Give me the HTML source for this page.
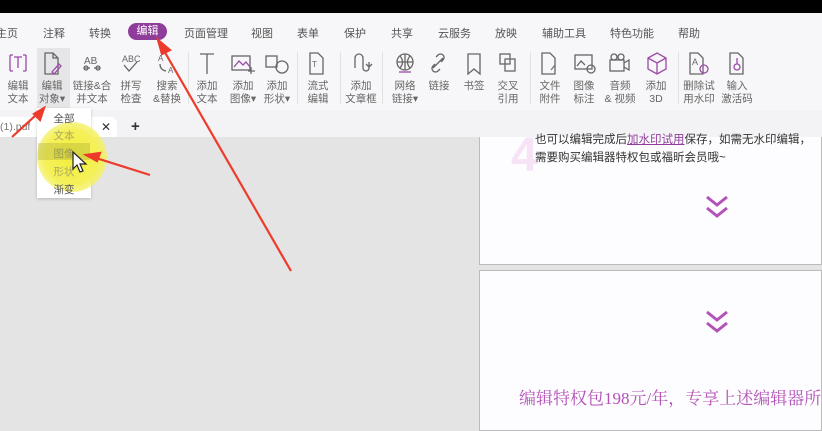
<!DOCTYPE html>
<html><head><meta charset="utf-8"><style>
*{margin:0;padding:0;box-sizing:border-box}
body{width:822px;height:431px;overflow:hidden;position:relative;background:#e4e4e4;font-family:"Liberation Sans","Noto Sans CJK SC",sans-serif;color:#555}
.abs{position:absolute}
.m{position:absolute;top:25px;font-size:11px;color:#555}
.t{position:absolute;top:80px;font-size:10.5px;line-height:13px;color:#666;text-align:center;width:44px;margin-left:-22px}
.ic{position:absolute;top:52px;width:24px;height:24px;margin-left:-12px}
.sep{position:absolute;top:52px;width:1px;height:52px;background:#e2e2e2}
.dd{position:absolute;left:38px;width:52px;text-align:center;font-size:10.5px;color:#555}
</style></head><body>
<div class="abs" style="left:0;top:0;width:822px;height:13px;background:#000"></div>
<div class="abs" style="left:0;top:13px;width:822px;height:97px;background:#f7f7f9"></div>
<div class="m" style="left:-4px">主页</div>
<div class="m" style="left:43px">注释</div>
<div class="m" style="left:89px">转换</div>
<div class="abs" style="left:128px;top:23px;width:39px;height:17px;border-radius:9px;background:#8e3d9a;color:#fff;font-size:11px;text-align:center;line-height:17px">编辑</div>
<div class="m" style="left:184px">页面管理</div>
<div class="m" style="left:251px">视图</div>
<div class="m" style="left:297px">表单</div>
<div class="m" style="left:344px">保护</div>
<div class="m" style="left:391px">共享</div>
<div class="m" style="left:438px">云服务</div>
<div class="m" style="left:495px">放映</div>
<div class="m" style="left:542px">辅助工具</div>
<div class="m" style="left:610px">特色功能</div>
<div class="m" style="left:678px">帮助</div>

<div class="abs" style="left:37px;top:48px;width:33px;height:61px;background:#e6e6e8"></div>
<svg class="abs" style="left:0;top:48px" width="822" height="32" fill="none" stroke="#666" stroke-width="1.3">
<g stroke="#9b4aa8"><path d="M10 7v16M10 7h3M10 23h3M26 7v16M23 7h3M23 23h3M14 9h8M18 9v11"/></g>
<path d="M45 5h8l5 5v16h-13z M53 5v5h5"/><path d="M52 24l7-8 2 2-7 8z" stroke="#9b4aa8"/>
<text x="84" y="16" font-size="10" fill="#666" stroke="none">AB</text><path d="M84 20h6M94 20h6"/><circle cx="86" cy="20" r="2"/><circle cx="98" cy="20" r="2"/>
<text x="122" y="14" font-size="9" fill="#666" stroke="none">ABC</text><path d="M124 17l5 6 8-9"/>
<text x="158" y="13" font-size="8" fill="#666" stroke="none">A</text><text x="168" y="25" font-size="8" fill="#666" stroke="none">A</text><path d="M160 16q0 6 6 7"/>
<path d="M200 6h14M207 6v20"/>
<rect x="232" y="8" width="18" height="14"/><path d="M234 19l5-6 4 4 3-3 4 5" stroke="#9b4aa8"/><path d="M251 19v7M248 23h7"/>
<rect x="266" y="8" width="11" height="11"/><circle cx="282" cy="19" r="6"/>
<path d="M310 5h8l5 5v16h-13z"/><text x="312" y="19" font-size="8" fill="#666" stroke="none">T</text>
<path d="M355 20v-10a4 4 0 0 1 8 0v10a3 3 0 0 0 6 0v-6"/><path d="M366 16l3 3 3-3"/>
<circle cx="405" cy="14" r="8"/><path d="M397 14h16M405 6v16M400 8q5 6 0 12M410 8q-5 6 0 12"/><path d="M399 24h12" stroke="#9b4aa8"/>
<path d="M433 20l10-10M435 16l-2 2a3 3 0 0 0 5 5l2-2M441 14l2-2a3 3 0 0 0-5-5l-2 2"/>
<path d="M468 6h12v20l-6-5-6 5z"/>
<rect x="500" y="6" width="10" height="10"/><rect x="505" y="11" width="10" height="12"/>
<path d="M542 5h8l5 5v16h-13z"/><path d="M551 22l4-5" stroke="#777"/>
<rect x="575" y="7" width="17" height="14"/><path d="M577 18l4-5 4 4"/><circle cx="591" cy="21" r="4"/>
<rect x="610" y="12" width="14" height="11"/><circle cx="614" cy="9" r="3"/><circle cx="621" cy="9" r="3"/><path d="M624 15l5-3v10l-5-3"/>
<g stroke="#9b4aa8"><path d="M648 10l9-5 9 5v11l-9 5-9-5z M648 10l9 5 9-5M657 15v11"/></g>
<path d="M690 5h8l5 5v16h-13z"/><text x="692" y="17" font-size="9" fill="#666" stroke="none">A</text><circle cx="704" cy="21" r="4" stroke="#9b4aa8"/>
<path d="M730 5h8l5 5v16h-13z"/><circle cx="737" cy="19" r="3" stroke="#9b4aa8"/><path d="M737 10v6" stroke="#9b4aa8"/>
</svg>
<div class="sep" style="left:188px"></div><div class="sep" style="left:297px"></div><div class="sep" style="left:340px"></div><div class="sep" style="left:382px"></div><div class="sep" style="left:530px"></div><div class="sep" style="left:678px"></div>
<div class="t" style="left:18px">编辑<br>文本</div>
<div class="t" style="left:52px">编辑<br>对象▾</div>
<div class="t" style="left:92px">链接&amp;合<br>并文本</div>
<div class="t" style="left:131px">拼写<br>检查</div>
<div class="t" style="left:167px">搜索<br>&amp;替换</div>
<div class="t" style="left:207px">添加<br>文本</div>
<div class="t" style="left:243px">添加<br>图像▾</div>
<div class="t" style="left:277px">添加<br>形状▾</div>
<div class="t" style="left:318px">流式<br>编辑</div>
<div class="t" style="left:361px">添加<br>文章框</div>
<div class="t" style="left:405px">网络<br>链接▾</div>
<div class="t" style="left:439px">链接</div>
<div class="t" style="left:474px">书签</div>
<div class="t" style="left:508px">交叉<br>引用</div>
<div class="t" style="left:550px">文件<br>附件</div>
<div class="t" style="left:584px">图像<br>标注</div>
<div class="t" style="left:620px">音频<br>&amp; 视频</div>
<div class="t" style="left:656px">添加<br>3D</div>
<div class="t" style="left:699px">删除试<br>用水印</div>
<div class="t" style="left:737px">输入<br>激活码</div>

<div class="abs" style="left:0;top:110px;width:822px;height:27px;background:#f3f3f5"></div>
<div class="abs" style="left:0;top:117px;width:117px;height:20px;background:#fff;border-radius:0 6px 0 0"></div>
<div class="abs" style="left:0;top:121px;font-size:10.5px;color:#777">(1).pdf</div>
<div class="abs" style="left:101px;top:120px;font-size:12px;color:#333">✕</div>
<div class="abs" style="left:131px;top:118px;font-size:15px;color:#333;font-weight:bold">+</div>

<div class="abs" style="left:479px;top:137px;width:343px;height:128px;background:#fdfcfe;border:1px solid #bbb;border-top:none"></div>
<div class="abs" style="left:479px;top:270px;width:343px;height:161px;background:#fdfcfe;border:1px solid #bbb"></div>
<div class="abs" style="left:511px;top:128px;font-size:48px;color:#f7e3f6;font-weight:bold">4</div>
<div class="abs" style="left:535px;top:131px;font-size:11.5px;color:#333;white-space:nowrap">也可以编辑完成后<span style="color:#8e3d9a;text-decoration:underline">加水印试用</span>保存，如需无水印编辑，</div>
<div class="abs" style="left:535px;top:149px;font-size:11.5px;color:#333">需要购买编辑器特权包或福昕会员哦~</div>
<svg class="abs" style="left:704px;top:194px" width="26" height="28" fill="none" stroke="#b352b8" stroke-width="3"><path d="M3 3l10 8 10-8M3 14l10 8 10-8"/></svg>
<svg class="abs" style="left:704px;top:309px" width="26" height="28" fill="none" stroke="#b352b8" stroke-width="3"><path d="M3 3l10 8 10-8M3 14l10 8 10-8"/></svg>
<div class="abs" style="left:519px;top:384px;font-size:17px;color:#b352b8;font-family:'Liberation Serif','Noto Serif CJK SC',serif;white-space:nowrap">编辑特权包198元/年，专享上述编辑器所</div>

<div class="abs" style="left:37px;top:108px;width:54px;height:90px;background:#fff;box-shadow:0 1px 3px rgba(0,0,0,.2)"></div>
<div class="abs" style="left:37px;top:122px;width:70px;height:70px;border-radius:50%;background:radial-gradient(circle,#f2ef3a 0,#f4f05a 55%,rgba(245,242,120,.6) 80%,rgba(245,242,120,0) 100%)"></div>
<div class="abs" style="left:38px;top:143px;width:52px;height:17px;background:rgba(170,170,60,.35)"></div>
<div class="dd" style="top:111px">全部</div>
<div class="dd" style="top:128px;color:#aaa860">文本</div>
<div class="dd" style="top:146px;color:#9a9a50">图像</div>
<div class="dd" style="top:164px;color:#aaa860">形状</div>
<div class="dd" style="top:182px">渐变</div>
<svg class="abs" style="left:70px;top:150px" width="20" height="26"><path d="M3 2v17l4-4 3 7 3-1-3-7h6z" fill="#fff" stroke="#222" stroke-width="1.2"/></svg>

<svg class="abs" style="left:0;top:0" width="822" height="431">
<g stroke="#ee3a2a" stroke-width="2.2" fill="#ee3a2a">
<path d="M291 271L163 49"/><path d="M158 40l12 10-8 4z"/>
<path d="M150 175L96 158"/><path d="M86 155l14-2-3 8z"/>
<path d="M12 137L36 115"/><path d="M44 108l-4 12-6-6z"/>
</g></svg>
</body></html>
